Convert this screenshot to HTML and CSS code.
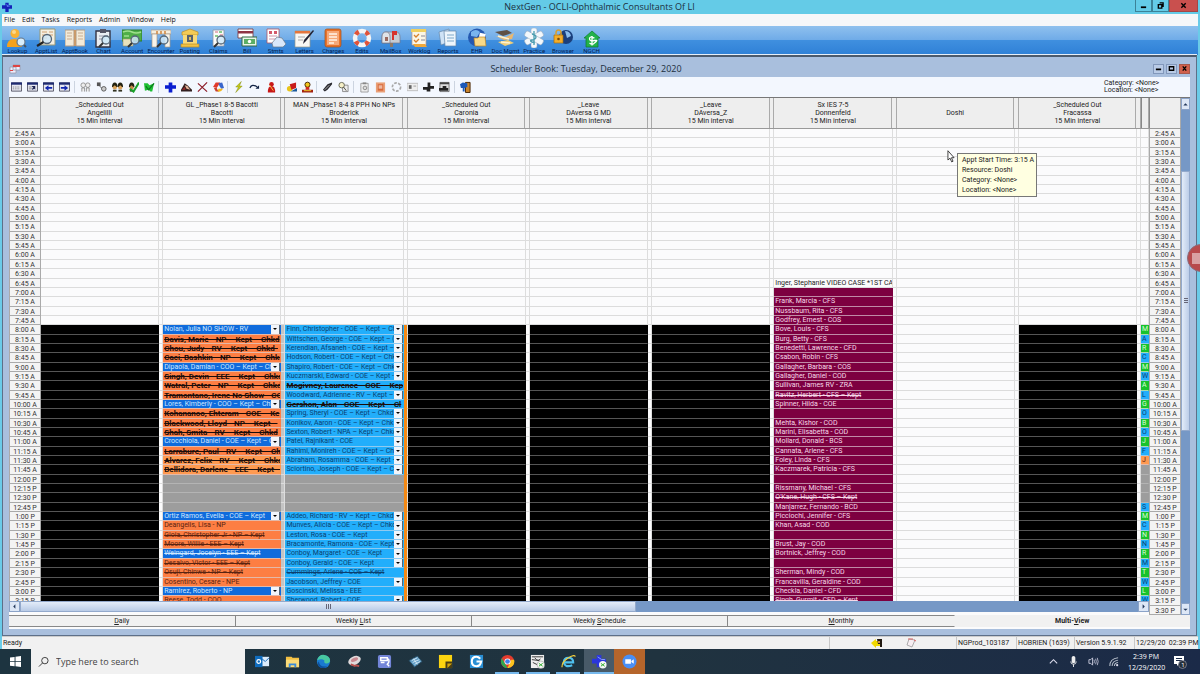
FILE: index.html
```html
<!DOCTYPE html>
<html lang="en">
<head>
    <meta charset="UTF-8">
    <meta name="viewport" content="width=device-width, initial-scale=1.0">
    <title>NextGen - OCLI-Ophthalmic Consultants Of LI</title>
    <link rel="stylesheet" href="styles.css">
</head>
<body>

    <header class="titlebar">
        <svg class="logo" viewBox="0 0 12 12"><path d="M4 1h4v3h4v4H8v4H4V8H0V4h4z" fill="#1420b8"/><path d="M5 2l2 2 3 1-4 1z" fill="#5a78f0"/></svg>
        <h1>NextGen - OCLI-Ophthalmic Consultants Of LI</h1>
        <div class="winbuttons">
            <button aria-label="Minimize"><svg viewBox="0 0 8 8"><path d="M1 5h6v2H1z"/></svg></button>
            <button aria-label="Restore"><svg viewBox="0 0 8 8"><path d="M3 1h4v4H6M1.500 3h4v4h-4z" fill="none" stroke="#000" stroke-width="1.500"/></svg></button>
            <button class="close" aria-label="Close"><svg viewBox="0 0 8 8"><path d="M1.500 1.500l5 5m0-5l-5 5" stroke="#000" stroke-width="1.600"/></svg></button>
        </div>
    </header>

    <nav class="menu">
        <button>File</button><button>Edit</button><button>Tasks</button><button>Reports</button><button>Admin</button><button>Window</button><button>Help</button>
    </nav>

    <div class="apps" id="apps"></div>

    <main class="mdi">
        <div class="child-title">
            <svg class="book" viewBox="0 0 12 10"><path d="M1 3h6v6H1zM4 1h7v5H4z" fill="#eef" stroke="#99a" stroke-width=".8"/><path d="M4 1h7v2H4zM1 6h3v1H1z" fill="#d44"/></svg>
            <h2>Scheduler Book: Tuesday, December 29, 2020</h2>
            <div class="childbuttons">
                <button aria-label="Minimize"><svg viewBox="0 0 8 8"><path d="M1 4h6v2H1z"/></svg></button>
                <button aria-label="Maximize"><svg viewBox="0 0 8 8"><path d="M1.500 2h5v4h-5z" fill="none" stroke="#000" stroke-width="1.500"/></svg></button>
                <button class="close" aria-label="Close"><svg viewBox="0 0 8 8"><path d="M2 1.500l4 5m0-5l-4 5" stroke="#000" stroke-width="1.500"/></svg></button>
            </div>
        </div>

        <div class="child">
            <div class="toolrow">
                <div class="tools" id="tools"></div>
                <div class="filters"><div>Category: &lt;None&gt;</div><div>Location: &lt;None&gt;</div></div>
            </div>

            <div class="board">
                <div class="sheet">
                    <table class="schedule">
                        <thead><tr id="head"></tr></thead>
                        <tbody id="rows"></tbody>
                    </table>
                    <div class="hscroll">
                        <button aria-label="Scroll left"><svg viewBox="0 0 8 8"><path d="M5 1.500v5L2.500 4z"/></svg></button>
                        <div class="hthumb"><i></i><i></i><i></i></div>
                        <div class="track"></div>
                        <button aria-label="Scroll right"><svg viewBox="0 0 8 8"><path d="M3 1.500v5L5.500 4z"/></svg></button>
                    </div>
                    <svg class="cursor" viewBox="0 0 8 14"><path d="M.7.800v10l2.300-2 1.700 4 1.500-.7-1.700-3.800h2.800z" fill="#fff" stroke="#222" stroke-width=".9"/></svg>
                    <div class="tip" role="tooltip">
                        <div>Appt Start Time: 3:15 A</div>
                        <div>Resource: Doshi</div>
                        <div>Category: &lt;None&gt;</div>
                        <div>Location: &lt;None&gt;</div>
                    </div>
                </div>
                <div class="vscroll">
                    <button aria-label="Scroll up"><svg viewBox="0 0 8 8"><path d="M1.500 5h5L4 2.500z"/></svg></button>
                    <div class="track top"></div>
                    <div class="vthumb"><i></i><i></i><i></i></div>
                    <div class="track low"></div>
                    <button aria-label="Scroll down"><svg viewBox="0 0 8 8"><path d="M1.500 3h5L4 5.500z"/></svg></button>
                </div>
            </div>

            <div class="tabs">
                <button><u>D</u>aily</button>
                <button>Weekly <u>L</u>ist</button>
                <button>Weekly <u>S</u>chedule</button>
                <button><u>M</u>onthly</button>
                <button class="active">Multi-<u>V</u>iew</button>
            </div>
        </div>
        <div class="recorder"><svg viewBox="0 0 26 28"><circle cx="14" cy="14" r="13.500" fill="#b84a4c" stroke="#8d6a78"/><path d="M5 9h8v11H5zM14 12l6-3v11l-6-3z" fill="#d9a0a2"/></svg></div>
    </main>

    <footer class="status">
        <span class="ready">Ready</span>
        <span class="tray-icons">
            <svg viewBox="0 0 12 10"><path d="M0 5l5-4v2h4v5H5v2z" fill="#f0d800"/><path d="M6 1h5v8H9V6H7z" fill="#221a10"/><path d="M7 3h2v2H7z" fill="#c98a50"/></svg>
            <svg viewBox="0 0 12 10"><path d="M4 1l6 1-3 7-5-2z" fill="#f7eef2" stroke="#999" stroke-width=".8"/><path d="M3 1h5M9 2l2 1" stroke="#d66"/></svg>
        </span>
        <span class="db">NGProd_103187</span>
        <span class="user">HOBRIEN (1639)</span>
        <span class="ver">Version 5.9.1.92</span>
        <span class="date">12/29/20&nbsp; 02:39 PM</span>
    </footer>

    <footer class="taskbar">
        <button class="start" aria-label="Start"><svg viewBox="0 0 12 12"><path d="M0 1.700l5-.7v4.700H0zM6 .9l6-.9v5.700H6zM0 6.500h5v4.700l-5-.7zM6 6.500h6V12l-6-.8z" fill="#fff"/></svg></button>
        <label class="search">
            <svg viewBox="0 0 12 12"><circle cx="7.500" cy="4.500" r="3.500" fill="none" stroke="#333"/><path d="M5 7L1 11" stroke="#333"/></svg>
            <input type="text" placeholder="Type here to search" aria-label="Type here to search">
        </label>
        <div class="pinned" id="pinned"></div>
        <div class="tray">
            <svg viewBox="0 0 12 12"><path d="M2 8l4-4 4 4" fill="none" stroke="#dde" stroke-width="1.200"/></svg>
            <svg viewBox="0 0 12 12"><rect x="4" y="0" width="4" height="8" rx="2" fill="#eee"/><path d="M3 6q0 3 3 3t3-3M6 9v3" fill="none" stroke="#eee"/></svg>
            <svg viewBox="0 0 12 12"><path d="M1 4h2l2-2v8L3 8H1z" fill="none" stroke="#dde" stroke-width=".9"/><path d="M6.500 4q1 2 0 4M8.300 3q1.500 3 0 6M10.100 2q2 4 0 8" fill="none" stroke="#dde" stroke-width=".8"/></svg>
            <svg viewBox="0 0 12 12"><path d="M2 11q0-8 9-9M4.500 11q0-5.500 6.500-6.500M7 11q0-3.500 4-4" fill="none" stroke="#b8c0cc" stroke-width="1.100"/><circle cx="10" cy="10" r="1.200" fill="#dde"/></svg>
            <time>2:39 PM<br>12/29/2020</time>
            <svg class="note" viewBox="0 0 14 14"><path d="M1 1h10v8H6l-2 2V9H1z" fill="#fff"/><path d="M3 3.500h6M3 5.500h6" stroke="#1b2b48"/><circle cx="9.500" cy="9.500" r="4" fill="#26303c" stroke="#99a" stroke-width=".7"/><text x="8.300" y="12" font-size="6" fill="#fff">1</text></svg>
        </div>
    </footer>

    <script src="script.js"></script>
</body>
</html>
```
FILE: styles.css
```css
* {
    box-sizing: border-box;
}

body {
    margin: 0;
    height: 100vh;
    display: flex;
    flex-direction: column;
    overflow: hidden;
    background: #6acbe8;
    font: 7px/8px Roboto, "Liberation Sans", sans-serif;
    color: #222;
}

button {
    margin: 0;
    padding: 0;
    border: 0;
    background: none;
    font: inherit;
    color: inherit;
}

svg {
    display: block;
}

h1, h2 {
    margin: 0;
    flex: 1;
    text-align: center;
    font: 9px/14px "Open Sans", sans-serif;
    color: #1c2f40;
}

/* main window */
.titlebar {
    flex: none;
    height: 14px;
    display: flex;
    align-items: center;
    padding: 0 2px;
    background: #64cbe7;
}

.logo {
    width: 10px;
    height: 10px;
}

.titlebar h1 {
    padding-left: 52px;
}

.winbuttons {
    display: flex;
    align-self: flex-start;
}

.winbuttons button {
    width: 17px;
    height: 12px;
    display: grid;
    place-items: center;
    border: 1px solid #3c8298;
    border-top: 0;
}

.winbuttons svg, .childbuttons svg {
    width: 7px;
    height: 7px;
}

.winbuttons .close {
    width: 29px;
    background: #c9504e;
    border-color: #a34747;
}

.menu {
    flex: none;
    height: 12px;
    margin: 0 2px;
    padding-left: 2px;
    display: flex;
    gap: 7px;
    background: #f6f7f9;
    font: 7px/12px "Open Sans", sans-serif;
    color: #111;
}

.apps {
    flex: none;
    height: 29px;
    margin: 0 2px;
    padding: 2px 0 0 1px;
    display: flex;
    background: linear-gradient(#8fc0ee, #6fabe8 48%, #3f8fdf 50%, #2f80d6);
}

.apps-grid {
    width: 603px;
    display: grid;
    grid-template-columns: repeat(21, 1fr);
}

.apps-grid button {
    display: flex;
    flex-direction: column;
    align-items: center;
    white-space: nowrap;
    font-size: 6px;
    line-height: 6px;
    color: #06204e;
}

.apps-grid svg {
    width: 20px;
    height: 20px;
}

/* scheduler book */
.mdi {
    flex: 1;
    min-height: 0;
    position: relative;
    margin: 0 3px 0 2px;
    display: flex;
    flex-direction: column;
    padding: 3px 6px 6px 6px;
    border: 1px solid #5d6f88;
    border-top: 2px solid #4c5a6c;
    background: #a9bfdd;
    box-shadow: 0 -1px #e6eef8;
}

.child-title {
    flex: none;
    height: 17px;
    display: flex;
    align-items: center;
}

.child-title h2 {
    padding-right: 2px;
}

.book {
    width: 12px;
    height: 10px;
}

.childbuttons {
    display: flex;
    gap: 2px;
}

.childbuttons button {
    width: 11px;
    height: 10px;
    display: grid;
    place-items: center;
    border: 1px solid #8298bb;
    background: #b9cbe6;
}

.childbuttons .close {
    background: #d0604c;
    border-color: #a8584c;
}

.child {
    flex: 1;
    min-height: 0;
    display: flex;
    flex-direction: column;
    background: #fbfbfc;
}

.toolrow {
    flex: none;
    height: 20px;
    display: flex;
    align-items: center;
    justify-content: space-between;
    background: #f3f7fe;
}

.tools {
    width: 464px;
    display: flex;
    justify-content: space-between;
}

.tools svg {
    width: 15px;
    height: 12px;
    padding: 0 2px;
}

.tools hr {
    width: 3px;
    margin: 0;
    border: 0;
    border-left: 1px solid #ccd4e0;
}

.filters {
    width: 86px;
    line-height: 7px;
}

.board {
    flex: 1;
    min-height: 0;
    display: flex;
    border-top: 1px solid #777;
}

.sheet {
    flex: 1;
    min-width: 0;
    position: relative;
    display: flex;
}

.schedule, .schedule tbody {
    flex: 1;
    min-width: 0;
    min-height: 0;
    display: flex;
    flex-direction: column;
}

.schedule thead {
    display: block;
}

.schedule tr {
    display: grid;
    grid-template-columns: 32px repeat(9, 1fr) 8px 32px;
}

.schedule tbody tr {
    flex: 1 1 0;
    min-height: 0;
}

.schedule th, .schedule td {
    padding: 0;
    min-width: 0;
    min-height: 0;
    font-weight: normal;
}

.schedule thead tr {
    height: 31px;
    background: #eee;
    border-bottom: 1px solid #999;
}

.schedule thead th {
    display: grid;
    grid-template-columns: 1fr 4px;
    place-items: center;
    border-right: 1px solid #aaa;
}

.schedule thead th.plain {
    display: block;
    border-left: 1px solid #888;
}

.schedule thead th::after {
    content: "";
    height: 100%;
    width: 4px;
    border-left: 1px solid #aaa;
}

.schedule thead th.plain::after {
    display: none;
}

.schedule .time {
    overflow: hidden;
    background: #f4f4f4;
    border: 1px solid #aaa;
    border-width: 0 1px 1px;
    text-align: center;
    line-height: 10px;
    color: #333;
}

.schedule td {
    display: grid;
    grid-template-columns: 1fr 4px;
}

.schedule td.sliver {
    grid-template-columns: 1fr;
}

.slot {
    min-width: 0;
    min-height: 0;
    display: flex;
    overflow: hidden;
    padding-left: 1px;
    white-space: nowrap;
    line-height: 9px;
    border-right: 1px solid #ddd;
    border-bottom: 1px solid #dcdcdc;
}

.slot span {
    flex: 1;
    min-width: 0;
    overflow: hidden;
}

.gap {
    border-right: 1px solid #ddd;
    border-bottom: 1px solid #dcdcdc;
}

.gap.gray {
    background: #c4c4c4;
}

.gap.amber {
    background: #f58a16;
    border-bottom-color: #f58a16;
}

.black { background: #000; border-color: #000 #000 #555; }
.maroon { background: #7d0040; color: #f6d8e8; border-color: #7d0040 #7d0040 #c08aa6; }
.blue { background: #0f6bdc; color: #cfe8ff; border-color: #0f6bdc #0f6bdc #e4b8a8; }
.orange { background: #fd7e43; color: #5a2310; border-color: #fd7e43 #fd7e43 #e4b8a8; }
.peach { background: #ff9a50; color: #5a2310; border-color: #ff9a50 #ff9a50 #e4b8a8; }
.sky { background: #22aefb; color: #0b3f70; border-color: #22aefb #22aefb #8fcaf0; }
.lunch { background: #9d9d9d; border-color: #9d9d9d #9d9d9d #b4b4b4; }
.green { background: #18c22c; color: #d8ffd8; border-color: #18c22c #18c22c #a8dcae; }

.strike {
    text-decoration: line-through;
}

.bold {
    font-size: 8px;
    font-weight: bold;
    color: #1c0d0a;
}

.drop {
    flex: none;
    width: 9px;
    background: #f2f5fa;
    border-right: 1px solid #567;
    display: grid;
    place-items: center;
}

.drop::after {
    content: "";
    border: 2px solid transparent;
    border-top-color: #000;
    border-bottom: 0;
}

/* scroll bars */
.hscroll {
    position: absolute;
    left: 0;
    right: 32px;
    bottom: 0;
    height: 14px;
    display: flex;
    border-bottom: 3px solid #fbfbfc;
    background: #7698c6;
}

.hscroll button, .vscroll button {
    flex: none;
    width: 11px;
    display: grid;
    place-items: center;
    background: #dde7f6;
    border: 1px solid #8ba3c8;
}

.hscroll svg, .vscroll svg {
    width: 7px;
    height: 7px;
    fill: #24395c;
}

.hthumb {
    flex: 615;
    display: flex;
    align-items: center;
    justify-content: center;
    gap: 1px;
    background: linear-gradient(#e3ecf9, #b9cbe6);
    border: 1px solid #93a9cc;
}

.hthumb i {
    width: 1px;
    height: 5px;
    background: #667;
}

.hscroll .track {
    flex: 502;
}

.vscroll {
    width: 9px;
    display: flex;
    flex-direction: column;
    background: #7698c6;
}

.vscroll button {
    width: 9px;
    height: 12px;
}

.vscroll .top {
    flex: 61;
}

.vscroll .low {
    flex: 173;
}

.vthumb {
    flex: 260;
    display: flex;
    flex-direction: column;
    align-items: center;
    justify-content: center;
    gap: 1px;
    background: linear-gradient(90deg, #e3ecf9, #bccde8);
    border: 1px solid #93a9cc;
}

.vthumb i {
    width: 4px;
    height: 1px;
    background: #667;
}

.cursor {
    position: absolute;
    left: 938px;
    top: 52px;
    width: 8px;
    height: 13px;
}

.tip {
    position: absolute;
    left: 948px;
    top: 55px;
    width: 80px;
    padding: 1px 0 1px 4px;
    background: #ffffe1;
    border: 1px solid #777;
    line-height: 10px;
}

.recorder {
    position: absolute;
    right: -4px;
    top: 187px;
    width: 13px;
    height: 28px;
    overflow: hidden;
}

.recorder svg {
    width: 26px;
    height: 28px;
}

.tabs {
    flex: none;
    height: 14px;
    display: grid;
    grid-template-columns: 227fr 237fr 256fr 228fr 235fr;
    padding-bottom: 2px;
}

.tabs button {
    background: #f1f1f1;
    border: 1px solid #888;
    border-left: 0;
}

.tabs .active {
    border-color: #f1f1f1;
    font-weight: bold;
}

.tabs button:nth-last-child(2) {
    border-right-color: #f1f1f1;
}

/* status bar */
.status {
    flex: none;
    height: 13px;
    margin: 0 2px;
    display: flex;
    background: #f1f1f1;
    border-top: 1px solid #ccc;
    font-size: 7px;
    line-height: 12px;
}

.status span {
    border-left: 1px solid #c8c8c8;
    padding-left: 1px;
    white-space: nowrap;
}

.status .ready {
    flex: 1;
    border: 0;
}

.status .tray-icons {
    width: 127px;
    display: flex;
    align-items: center;
    justify-content: center;
    gap: 22px;
}

.status svg {
    width: 12px;
    height: 10px;
}

.status .db { width: 60px; }
.status .user { width: 58px; }
.status .ver { width: 60px; }
.status .date { width: 64px; }

/* taskbar */
.taskbar {
    flex: none;
    height: 25px;
    display: flex;
    background: linear-gradient(90deg, #1d3440, #20333f 55%, #1b2a48);
    color: #fff;
}

.start {
    width: 31px;
    display: grid;
    place-items: center;
}

.start svg {
    width: 11px;
    height: 11px;
}

.search {
    width: 214px;
    display: flex;
    align-items: center;
    gap: 7px;
    padding-left: 7px;
    background: #f1f1f1;
}

.search svg {
    width: 11px;
    height: 12px;
}

.search input {
    flex: 1;
    min-width: 0;
    padding: 0;
    border: 0;
    background: none;
    font: 9px "Open Sans", sans-serif;
}

.search input::placeholder {
    color: #444;
    opacity: 1;
}

.pinned {
    width: 398px;
    margin-left: 2px;
    display: grid;
    grid-template-columns: repeat(13, 1fr);
}

.pinned button {
    display: grid;
    place-items: center;
}

.pinned svg {
    width: 15px;
    height: 15px;
}

.pinned .run {
    background: linear-gradient(#76b9ed, #76b9ed) center bottom / 24px 2px no-repeat;
}

.pinned .current {
    background: linear-gradient(#485a68 23px, #76b9ed 23px);
}

.pinned .alert {
    background: #b5652b;
}

.tray {
    margin-left: auto;
    padding-right: 13px;
    display: flex;
    align-items: center;
    gap: 9px;
}

.tray svg {
    width: 11px;
    height: 11px;
}

.tray time {
    width: 36px;
    text-align: center;
    white-space: nowrap;
    font: 7px/11px "Open Sans", sans-serif;
}

.tray .note {
    width: 14px;
    height: 14px;
}
```
FILE: script.js
```js
// main toolbar: label + 20x20 drawing
const lens = '<circle cx="13" cy="12" r="4" fill="#cfe8f8" fill-opacity=".85" stroke="#567" stroke-width="1.300"/><path d="M10 15l-4 4" stroke="#333" stroke-width="2"/>';
const sheet = '<path d="M5 2h11v16H5z" fill="#fbfbf8" stroke="#8a96a8" stroke-width=".8"/>';
const apps = [
    ["Lookup", '<circle cx="8" cy="5.500" r="4.500" fill="#f9b233"/><circle cx="7" cy="4" r="2" fill="#fdd88a"/><path d="M0 19q0-8 7-8t8 8z" fill="#f5a21c"/><circle cx="14" cy="14" r="4" fill="#d7eefc" stroke="#678" stroke-width="1.200"/><path d="M17 17l2 2" stroke="#456" stroke-width="2"/>'],
    ["ApptList", '<path d="M4 1h15v16H4z" fill="#f4efe2" stroke="#997"/><path d="M6 4h5M13 4h4M6 7h5M13 7h4M6 10h5" stroke="#d0a070"/><circle cx="11" cy="11" r="4.500" fill="#cfe8f8" fill-opacity=".85" stroke="#567" stroke-width="1.300"/><path d="M7.500 14L1 18" stroke="#222" stroke-width="2.200"/>'],
    ["ApptBook", '<path d="M0 2h9v16H0zM11 2h9v16h-9z" fill="#f3ead8" stroke="#a98"/><path d="M2 5h5M2 8h5M2 11h5M13 5h5M13 8h5M13 11h5" stroke="#c8ac90"/><path d="M9 2h2v16H9z" fill="#c99a6a"/>'],
    ["Chart", '<path d="M3 3h14v16H3z" fill="#e9edf2" stroke="#334" stroke-width="1.400"/><path d="M7 1h6v4H7z" fill="#556"/><path d="M6 8h9M6 11h6" stroke="#99a"/>' + lens],
    ["Account", '<path d="M0 2h20v11H0z" fill="#4fae48" stroke="#2a7a2c"/><path d="M1 4q5-2 9 0t9 0M2 8h5" fill="none" stroke="#9fe08c" stroke-width="1.600"/><path d="M1 11h10v7H1z" fill="#e8e2bc" stroke="#9a9468" stroke-width=".6"/>' + lens],
    ["Encounter", '<path d="M0 2h20v4H0z" fill="#f6eedd" stroke="#a98" stroke-width=".7"/><path d="M1 6h5v13H1zM14 6h5v13h-5z" fill="#f8f4ea" stroke="#a98" stroke-width=".7"/><path d="M6 3v3M10 3v3M14 3v3" stroke="#d08a48" stroke-width="1.600"/>' + lens],
    ["Posting", '<path d="M2 4l8-3 8 3v3H2z" fill="#f3cb56" stroke="#b98c26" stroke-width=".7"/><path d="M3 7h14v9H3z" fill="#f7da79"/><path d="M7 7h6v7H7z" fill="#55606e"/><path d="M9 9h2v3H9z" fill="#e0c060"/><path d="M1 16h18v3H1z" fill="#f0c244" stroke="#b98c26" stroke-width=".7"/>'],
    ["Claims", sheet + '<path d="M7 4h3M12 7h3" stroke="#e09aa5" stroke-width="1.400"/><path d="M11 4h3M7 8h3" stroke="#6abf6a" stroke-width="1.400"/>' + lens],
    ["Bill", '<path d="M1 1h15v9H1z" fill="#fff" stroke="#733" stroke-width=".8"/><path d="M1 3h15v2.500H1z" fill="#8e3444"/><path d="M5 9h15v9H5z" fill="#e8f6e8" stroke="#364"/><path d="M7 11h11v5H7z" fill="#5aae64"/><circle cx="12.500" cy="13.500" r="1.700" fill="#fff"/>'],
    ["Stmts", '<path d="M1 1h12v14H1z" fill="#fff" stroke="#a56" stroke-width=".8"/><path d="M3 3h3v3H3zM8 3h3v3H8z" fill="#d45a6a"/><path d="M3 8h8M3 11h8" stroke="#c9a"/><path d="M11 9l5 1 4 6-3 3H7l-1-4z" fill="#d8e8fa" stroke="#678" stroke-width=".7"/>'],
    ["Letters", '<path d="M1 3h15v16H1z" fill="#f8f8f4" stroke="#998" stroke-width=".7"/><path d="M1 3h15v2.500H1z" fill="#e4763c"/><path d="M4 9h7M4 12h5" stroke="#aaa"/><path d="M20 3l-8 10-3 3 1-4 9-10z" fill="#223"/>'],
    ["Charges", '<rect x="2" y="1" width="16" height="18" rx="2" fill="#e8742c" stroke="#a34d16" stroke-width=".7"/><path d="M4 3h12v14H4z" fill="#f6a878"/><path d="M6 6h8M6 9h8M6 12h8M6 15h5" stroke="#fff3e8" stroke-width="1.300"/>'],
    ["Edits", '<circle cx="10" cy="10" r="7" fill="none" stroke="#f5f5f5" stroke-width="4.500"/><circle cx="10" cy="10" r="7" fill="none" stroke="#e0533a" stroke-width="4.500" stroke-dasharray="4 7" stroke-dashoffset="-3.500"/>'],
    ["MailBox", '<path d="M1 9q0-5 4-5h10q4 0 4 5v6H1z" fill="#c5ccd4" stroke="#778" stroke-width=".7"/><path d="M1 9q0-5 4-5t4 5v6H1z" fill="#dfe3e8" stroke="#778" stroke-width=".7"/><path d="M4 9h3v4H4z" fill="#9a6a60"/><path d="M9 15h3v4H9z" fill="#8c7a6a"/><path d="M11 3h5v4h-3v5h-2z" fill="#d6332c"/>'],
    ["Worklog", '<path d="M3 2h14v15H3z" fill="#fbf6e6" stroke="#b98" stroke-width=".7"/><path d="M2 1h15v3H2z" fill="#f0d060"/><path d="M5 7l2 2 3-3M5 12l2 2 3-3" fill="none" stroke="#d9822c" stroke-width="1.300"/><path d="M12 8h4M12 12h4" stroke="#889"/><path d="M4 16h12l2 3H6z" fill="#f0a83a"/>'],
    ["Reports", '<path d="M1 4l10-3v13l-8 3z" fill="#cfe3f6" stroke="#68a" stroke-width=".7"/><path d="M6 3h12v15H7z" fill="#eef6fc" stroke="#68a" stroke-width=".7"/><path d="M9 7h7M9 10h7M9 13h7" stroke="#7fa8c8"/>'],
    ["EHR", '<circle cx="10" cy="9.500" r="9" fill="#2458b0"/><path d="M4 4q5-4 9 0l-3 5-6-1z" fill="#78b4ee"/><path d="M12 5h6v8h-6z" fill="#fff" transform="rotate(12 14 9)"/><path d="M7 10h4l1-1h6l1 9H8z" fill="#f8d988" stroke="#c08b2a" stroke-width=".7"/>'],
    ["Doc Mgmt", '<path d="M0 4l12-2 5 3-9 3z" fill="#5e5046"/><path d="M1 8l10 1 8-4-2 6-8 1z" fill="#e8b872"/><path d="M3 14l10-2 6 3-9 3z" fill="#f0cf7a"/><path d="M3 8l11 3M6 14l9 1" stroke="#fff3d2" stroke-width="1.400"/>'],
    ["Practice", '<g fill="#f3f8fc" stroke="#9ab" stroke-width=".5"><rect x="7" y="0" width="6" height="20" rx="2"/><rect x="7" y="0" width="6" height="20" rx="2" transform="rotate(60 10 10)"/><rect x="7" y="0" width="6" height="20" rx="2" transform="rotate(120 10 10)"/></g><path d="M10 3v14M8 6q4 1 4 3t-4 3 3 3" fill="none" stroke="#4a9db0" stroke-width="1.300"/>'],
    ["Browser", '<circle cx="13" cy="9" r="7" fill="#1b3f7c"/><path d="M12 3q5 0 6 5l-4 2z" fill="#8abcec"/><path d="M1 7h9v8H1z" fill="#f4ae2a" stroke="#a86d10" stroke-width=".7"/><path d="M3 7V5q0-3 2.500-3T8 5v2" fill="none" stroke="#d8a030" stroke-width="1.500"/><circle cx="5.500" cy="11" r="1.300" fill="#7a4a08"/>'],
    ["NGCH", '<path d="M10 3l8 7h-2v9H4v-9H2z" fill="#22b24a" stroke="#0f7a2c" stroke-width=".7"/><path d="M12.500 10q-5-2-5 .8t5 1.700-1 3.300q-2 1-4-.8M10 8v9.500" fill="none" stroke="#fff" stroke-width="1.300"/>']
];

document.getElementById("apps").innerHTML = '<div class="apps-grid">' +
    apps.map(a => `<button><svg viewBox="0 0 20 20">${a[1]}</svg>${a[0]}</button>`).join("") + "</div>";

// scheduler toolbar, "|" is a separator
const cal = '<path d="M.5 1.500h11v9H.5z" fill="#e4e6f0" stroke="#445" stroke-width=".9"/><path d="M0 1h12v2.500H0z" fill="#1d2a70"/>';
const face = (x, c) => `<circle cx="${x}" cy="6" r="2.600" fill="${c}"/><path d="M${x - 3} 6q0-5 3-5t3 5l-1 0-2-2-2 2z" fill="#221"/><path d="M${x - 2} 9h4v2h-4z" fill="#332"/>`;
const tools = [
    cal + '<path d="M2 6h8M2 8h8" stroke="#888" stroke-dasharray="1.500 1"/>',
    cal + '<path d="M2 6h3M2 8h3" stroke="#888"/><path d="M5 5h4v4L8 8l-2 1-1-1 2-1z" fill="#1a2050"/>',
    cal + '<path d="M2 7l4-3v2h4v2H6v2z" fill="#1026b0"/>',
    cal + '<path d="M10 7L6 4v2H2v2h4v2z" fill="#1026b0"/>',
    "|",
    '<g fill="#eee" stroke="#888" stroke-width=".9"><circle cx="3.500" cy="4" r="2.500"/><circle cx="8.500" cy="4" r="2.500"/><path d="M2 11V7h3v4M7 11V7h3v4"/></g>',
    '<path d="M1 1h4v4H1z" fill="#555"/><path d="M4 5l3 3" stroke="#555"/><circle cx="8.500" cy="8" r="2.500" fill="#ccc" stroke="#555"/>',
    face(3, "#d9a35c") + face(9, "#d9a35c"),
    face(4, "#c98a4a") + '<path d="M2 8l4 3 6-10" fill="none" stroke="#1aa02a" stroke-width="2.200"/>',
    '<path d="M0 2h4l2 2 5-2-2 9H7l-2-2-4 1z" fill="#1fc034"/><path d="M2 5l3 4 6-7" fill="none" stroke="#0c7a1c" stroke-width="1.300"/>',
    "|",
    '<path d="M4 1h4v3h4v4H8v4H4V8H0V4h4z" fill="#0a1ed0"/>',
    '<path d="M0 9l4-7 3 2 5 5v2H0z" fill="#332020"/><path d="M4 4l3 1 3 4-4-1z" fill="#e4b49a"/><path d="M1 9l3-3 1 3z" fill="#a02a2a"/>',
    '<path d="M1 2l10 9M11 1L1 11" stroke="#8c1c28" stroke-width="1.300"/>',
    '<path d="M0 6l3-5h5L6 4 4 7z" fill="#e23a2a"/><path d="M6 2l4-1 2 6-3 1-2-3z" fill="#3a66cc"/><path d="M11 8q-2 4-6 3l1-3z" fill="#f4b81c"/><path d="M1 7l3 0 2 4H3z" fill="#c8402c"/>',
    "|",
    '<path d="M9 0L3 6h3l-3 6 7-7H7z" fill="#c8cc18" stroke="#7c8410" stroke-width=".5"/>',
    '<path d="M1 7q2-5 8-1" fill="none" stroke="#124" stroke-width="1.300"/><path d="M11 4v4H7z" fill="#124"/>',
    '<circle cx="6" cy="3" r="2.500" fill="#c81818"/><path d="M2 12q0-7 4-7t4 7z" fill="#c81818"/><path d="M4 4l4 6" stroke="#fc4"/>',
    "|",
    '<circle cx="4" cy="8" r="3" fill="#e8c41c"/><path d="M4 3l7-2v6L6 9z" fill="#c81c1c"/><path d="M5 11h7V7z" fill="#1a5a9a"/>',
    '<circle cx="6" cy="3.500" r="2.800" fill="#f0c41c" stroke="#420"/><path d="M4 6h4v3H4z" fill="#d02a1c"/><path d="M0 9h12v3H0z" fill="#a02010"/><path d="M2 10h8" stroke="#f3cf2c"/>',
    "|",
    '<path d="M1 9l5-6 5-2v2L6 9l-3 2z" fill="#2a2a30"/><path d="M3 9l5-5" stroke="#bbb"/>',
    '<path d="M5 4h6v7H5z" fill="#eee" stroke="#888"/><circle cx="4" cy="4" r="3" fill="#f6f0c8" stroke="#665"/><path d="M6 6l3 4" stroke="#443"/>',
    "|",
    '<path d="M2 2h8v9.500H2z" fill="#eee" stroke="#888" stroke-width=".8"/><path d="M4 1h4v2H4z" fill="#888"/><circle cx="6.500" cy="7" r="2" fill="#ddd" stroke="#888"/>',
    '<path d="M1 1h10v11H1z" fill="#e9a078"/><path d="M3 3h6v7H3z" fill="#d8693a"/><path d="M4 5h4M4 7h4" stroke="#fff"/>',
    '<circle cx="6" cy="6" r="4.500" fill="none" stroke="#aaa" stroke-width="1.800" stroke-dasharray="3 1.500"/>',
    '<path d="M0 2h12v8H0z" fill="#eee" stroke="#bbb"/><path d="M2 4h3v4H2z" fill="#666"/><path d="M7 5h3" stroke="#999"/>',
    '<path d="M5 1h3v4h4v3H8v3H4V9H0V6h5z" fill="#222"/>',
    '<path d="M1 1h10v10H1z" fill="#ddd" stroke="#555" stroke-width=".8"/><path d="M1 1h10v2H1z" fill="#444"/><path d="M0 7h4V5h4v2h2v3H0z" fill="#222"/>',
    "|",
    '<path d="M6 1h5v11H6z" fill="#c8842c" stroke="#420"/><path d="M0 3l3-2 5 1v4L5 7v4H3V7H1z" fill="#1c58b8"/>'
];

document.getElementById("tools").innerHTML = tools.map(t =>
    t === "|" ? "<hr>" : `<button><svg viewBox="0 0 12 12">${t}</svg></button>`).join("");

const heads = [
    "_Scheduled Out|Angelilli|15 Min interval",
    "GL _Phase1 8-5 Bacotti|Bacotti|15 Min interval",
    "MAN _Phase1 8-4 8 PPH No NPs|Broderick|15 Min interval",
    "_Scheduled Out|Caronia|15 Min interval",
    "_Leave|DAversa G MD|15 Min interval",
    "_Leave|DAversa_Z|15 Min interval",
    "Sx IES 7-5|Donnenfeld|15 Min interval",
    "Doshi",
    "_Scheduled Out|Fracassa|15 Min interval"
];

document.getElementById("head").innerHTML = '<th class="plain"></th>' +
    heads.map(h => `<th><div>${h.replaceAll("|", "<br>")}</div></th>`).join("") +
    '<th class="plain"></th><th class="plain"></th>';

// each entry is "color flags text"; b = bold, s = strike, d = drop-down, - = none
const bacotti = [
    "blue d Nolan, Julia NO SHOW - RV",
    "orange bs Davis, Marie - NP – Kept – Chkd",
    "orange bs Chou, Judy - RV – Kept – Chkd-",
    "orange bs Caci, Bashkin - NP – Kept – Chkd",
    "blue d Dipaola, Damian - COO – Kept – Ch",
    "orange bs Singh, Devin - EEE – Kept – Chkd",
    "orange bs Watral, Peter - NP – Kept – Chkd",
    "orange bs Tramontano, Irene No Show - CO",
    "blue d Lores, Kimberly - COO – Kept – Chkd",
    "orange bs Kohananoo, Ehteram - COE – Ke",
    "orange bs Blackwood, Lloyd - NP – Kept –",
    "orange bs Shah, Smita - RV – Kept – Chkd",
    "blue d Crocchiola, Daniel - COE – Kept – C",
    "orange bs Larrabure, Paul - RV – Kept – Ch",
    "peach bs Alvarez, Felix - RV – Kept – Chkd",
    "peach bs Bellidora, Darlene - EEE – Kept –",
    "lunch -", "lunch -", "lunch -", "lunch -",
    "blue d Ortiz Ramos, Evelia - COE – Kept",
    "orange - Deangelis, Lisa - NP",
    "orange s Gioia, Christopher Jr - NP – Kept",
    "orange s Moore, Willie - EEE – Kept",
    "blue s Weingard, Jocelyn - EEE – Kept",
    "orange s Desalvo, Victor - EEE – Kept",
    "orange s Osuji, Chinwe - NP – Kept",
    "orange - Cosentino, Cesare - NPE",
    "blue d Ramirez, Roberto - NP",
    "orange - Reese, Todd - COO"
];
const broderick = [
    "sky d Finn, Christopher - COE – Kept – Ch",
    "sky d Wittschen, George - COE – Kept – (",
    "sky d Kerendian, Afsaneh - COE – Kept –",
    "sky d Hodson, Robert - COE – Kept – Chk",
    "sky d Shapiro, Robert - COE – Kept – Chk",
    "sky d Kuczmarski, Edward - COE – Kept -",
    "sky bs Mogivney, Laurence - COE – Kep",
    "sky d Woodward, Adrienne - RV – Kept –",
    "sky bs Gershon, Alan - COE – Kept – Cl",
    "sky d Spring, Sheryl - COE – Kept – Chkd",
    "sky d Konikov, Aaron - COE – Kept – Chk",
    "sky d Sexton, Robert - NPA – Kept – Chkc",
    "sky d Patel, Rajnikant - COE",
    "sky d Rahimi, Monireh - COE – Kept – Chl",
    "sky d Abraham, Rosamma - COE – Kept –",
    "sky d Sciortino, Joseph - COE – Kept – Cl",
    "lunch -", "lunch -", "lunch -", "lunch -",
    "sky d Addeo, Richard - RV – Kept – Chkd",
    "sky d Munves, Alicia - COE – Kept – Chkd",
    "sky d Leston, Rosa - COE – Kept",
    "sky d Bracamonte, Ramona - COE – Kept",
    "sky d Conboy, Margaret - COE – Kept",
    "sky d Conboy, Gerald - COE – Kept",
    "sky s Cummings, Arlene - COE – Kept",
    "sky d Jacobson, Jeffrey - COE",
    "sky - Goscinski, Melissa - EEE",
    "sky d Sherwood, Robert - COE"
];
const donnenfeld = ["white - Inger, Stephanie VIDEO CASE *1ST CA"].concat([
    "", "Frank, Marcia - CFS", "Nussbaum, Rita - CFS", "Godfrey, Ernest - COS",
    "Bove, Louis - CFS", "Burg, Betty - CFS", "Benedetti, Lawrence - CFD", "Csabon, Robin - CFS",
    "Gallagher, Barbara - COS", "Gallagher, Daniel - COD", "Sullivan, James RV - ZRA", "~Ravitz, Herbert - CFS – Kept",
    "Spinner, Hilda - COE", "", "Mehta, Kishor - COD", "Marini, Elisabetta - COD",
    "Mollard, Donald - BCS", "Cannata, Arlene - CFS", "Foley, Linda - CFS", "Kaczmarek, Patricia - CFS",
    "", "Rissmany, Michael - CFS", "~O'Kane, Hugh - CFS – Kept", "Manjarrez, Fernando - BCD",
    "Picciochi, Jennifer - CFS", "Khan, Asad - COD", "", "Brust, Jay - COD",
    "Bortnick, Jeffrey - COD", "", "Sherman, Mindy - COD", "Francavilla, Geraldine - COD",
    "Checkla, Daniel - CFD", "~Singh, Gurmit - CFD – Kept"
].map(n => n[0] === "~" ? "maroon s " + n.slice(1) : "maroon - " + n));
const next = "green M,sky A,green R,sky C,green M,sky W,green A,sky L,green G,sky O,green B,sky O,green J,sky F,peach J,lunch,lunch,lunch,lunch,sky S,green M,sky C,green N,sky N,green R,sky M,green T,sky W,green L,sky W".split(",");

const first = 11;   // rows start at 2:45 A, counted in quarter hours
const eight = 32;

function label(q) {
    const h = Math.floor(q / 4);
    return ((h + 11) % 12 + 1) + ":" + String(q % 4 * 15).padStart(2, "0") + (h < 12 ? " A" : " P");
}

function cell(entry, gap) {
    if (!entry) return '<td><div class="slot"></div><div class="gap"></div></td>';
    const [color, flags, ...words] = entry.split(" ");
    let cls = "";
    if (flags.includes("b")) cls += " bold";
    if (flags.includes("s")) cls += " strike";
    const drop = flags.includes("d") ? '<button class="drop" aria-label="Details"></button>' : "";
    return `<td><div class="slot ${color}"><span class="${cls.trim()}">${words.join(" ")}</span>${drop}</div><div class="gap ${gap || ""}"></div></td>`;
}

let html = "";
for (let q = first; q < first + 52; q++) {
    const n = q - eight;
    const out = n >= 0 ? "black -" : null;
    const more = n >= 0 && n < 30 ? next[n].split(" ") : ["", ""];
    html += `<tr><th class="time">${label(q)}</th>`
        + cell(out)
        + cell(n >= 0 && (bacotti[n] || "orange -"), "gray")
        + cell(n >= 0 && (broderick[n] || "sky -"), "amber")
        + cell(out) + cell(out) + cell(out)
        + cell(donnenfeld[q - 27] || (n > 0 && "maroon -"))
        + cell(null)
        + cell(out)
        + `<td class="sliver"><div class="slot ${more[0]}">${more[1] || ""}</div></td>`
        + `<th class="time">${label(q)}</th></tr>`;
}
document.getElementById("rows").innerHTML = html;

const pinned = [
    ["", "Outlook", '<path d="M6 3h9v10H6z" fill="#dcecfa"/><path d="M6 4l5 4 4-4" fill="none" stroke="#1769b8"/><path d="M0 2h8v12H0z" fill="#0f6cbd"/><circle cx="4" cy="8" r="2" fill="none" stroke="#fff" stroke-width="1.300"/>'],
    ["", "Files", '<path d="M1 3h6l1 1h7v10H1z" fill="#f3c042"/><path d="M1 6h14v8H1z" fill="#fcdc78"/><path d="M4 10h8v4h-2v-2H6v2H4z" fill="#3b8bd8"/>'],
    ["", "Edge", '<circle cx="8" cy="8" r="7" fill="#1a7bd0"/><path d="M1 7q2-7 8-6 6 1 6 6 0 3-4 3-3 0-2-3-3-3-8 0z" fill="#48c8a0"/><path d="M3 8q1 7 9 5-5 4-9 0-2-3 0-5z" fill="#0d4f9c"/>'],
    ["", "Disc", '<ellipse cx="8" cy="7" rx="7" ry="4.500" fill="#e0dadb" transform="rotate(-25 8 7)"/><ellipse cx="8" cy="6" rx="4" ry="2" fill="#c98890" transform="rotate(-25 8 6)"/><path d="M9 12l4 1M4 11l5 2" stroke="#b9504c" stroke-width="2"/>'],
    ["", "Capture", '<rect x="1" y="1" width="14" height="14" rx="2" fill="#7385d8"/><path d="M4 4h7v3H4zM4 9h4M12 5q2 3-1 6l2 2" fill="none" stroke="#fff" stroke-width="1.500"/>'],
    ["", "Notes", '<path d="M1 7l9-5 5 6-8 6z" fill="#5f9cc4" stroke="#26495f"/><path d="M4 7l6-3M5 9l7-3M7 11l6-3M6 5l4 6" stroke="#d4e8f4"/>'],
    ["", "Sticky Notes", '<path d="M1 1h14v14H1z" fill="#fcd410"/><path d="M8 8h7v7H8z" fill="#4a3d12"/><path d="M10 15v-5h5z" fill="#d4a80e"/>'],
    ["", "G", '<path d="M1 1h14v14H1z" fill="#2a8fd4"/><path d="M12 5q-2-2-4-2-5 0-5 5t5 5q4 0 5-5H8" fill="none" stroke="#fff" stroke-width="2.200"/>'],
    ["run", "Chrome", '<circle cx="8" cy="8" r="7" fill="#e33b2e"/><path d="M2 4.500L8 15A7 7 0 0 1 2 4.500z" fill="#2da94f"/><path d="M8 15l4-9h3a7 7 0 0 1-7 9z" fill="#fcc31e"/><circle cx="8" cy="8" r="3.300" fill="#fff"/><circle cx="8" cy="8" r="2.500" fill="#3f80ec"/>'],
    ["run", "Documents", '<path d="M1 1h14v14H1z" fill="#eee"/><path d="M2 3h12M2 6l8 1M3 9l6 3M5 4q4 5 6 1" fill="none" stroke="#333"/><circle cx="11.500" cy="11.500" r="4" fill="#f6f6f6" stroke="#888" stroke-width=".5"/><path d="M9.500 10l2 1.500-2 1.500M13.500 10l-2 1.500 2 1.500" fill="none" stroke="#2a2"/>'],
    ["run", "Internet Explorer", '<path d="M3.500 9h9.500q0-5-5-5t-5 5q1 6 9 3" fill="none" stroke="#4fc0ee" stroke-width="2.300"/><path d="M1 14Q1 8 8 4t7-1" fill="none" stroke="#f4cf3c" stroke-width="1.300"/>'],
    ["current", "NextGen", '<path d="M5 1h5v4h5v5h-5v4H5v-4H0V5h5z" fill="#2a36dc"/><path d="M6 3q4 4 8 3" stroke="#8ea4ff" fill="none"/><circle cx="11.500" cy="11.500" r="4" fill="#f6f6f6"/><path d="M9.500 10l2 1.500-2 1.500M13.500 10l-2 1.500 2 1.500" fill="none" stroke="#2a2"/>'],
    ["alert", "Zoom", '<circle cx="8" cy="8" r="7.500" fill="#4a8ff6"/><path d="M3.500 5.500h6v5h-6zM10 7.500l2.500-2v5L10 8.500z" fill="#fff"/>']
];
document.getElementById("pinned").innerHTML = pinned.map(p =>
    `<button class="${p[0]}" aria-label="${p[1]}"><svg viewBox="0 0 16 16">${p[2]}</svg></button>`).join("");
```
